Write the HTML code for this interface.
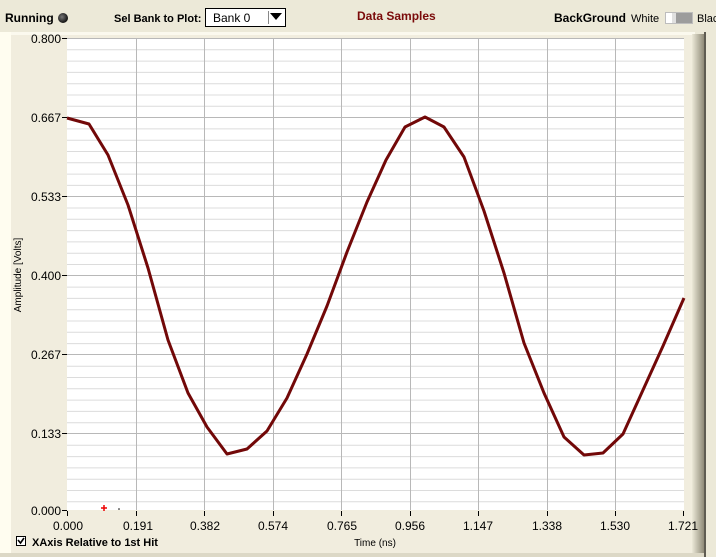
<!DOCTYPE html>
<html><head><meta charset="utf-8"><style>
html,body{margin:0;padding:0;width:716px;height:557px;overflow:hidden;background:#ece9d8;}
svg{display:block;font-family:"Liberation Sans",sans-serif;}
</style></head><body>
<svg width="716" height="557" viewBox="0 0 716 557">
<defs>
<linearGradient id="sh" x1="0" x2="1"><stop offset="0" stop-color="#ece9d8"/><stop offset="1" stop-color="#8f8a78"/></linearGradient>
<radialGradient id="led" cx="0.4" cy="0.4" r="0.6"><stop offset="0" stop-color="#777"/><stop offset="1" stop-color="#111"/></radialGradient>
</defs>
<rect width="716" height="557" fill="#ece9d8"/>
<rect x="0" y="32" width="11" height="525" fill="#fffdf0"/>
<rect x="11" y="32" width="684" height="521" fill="#f1edde"/>
<rect x="11" y="32" width="684" height="3" fill="#fbf9ee"/>
<rect x="692" y="34" width="12" height="519" fill="url(#sh)"/>
<rect x="704" y="32" width="2" height="525" fill="#5f5c52"/>
<rect x="706" y="32" width="10" height="525" fill="#ece9d8"/>
<rect x="0" y="553" width="704" height="4" fill="#dcd8c6"/>
<!-- header -->
<text x="5" y="22" font-size="12" font-weight="bold" fill="#000">Running</text>
<circle cx="63" cy="18" r="5" fill="url(#led)"/>
<text x="114" y="22" font-size="11" font-weight="bold" fill="#000">Sel Bank to Plot:</text>
<rect x="205.5" y="8.5" width="80" height="18" fill="#fff" stroke="#000"/>
<text x="213" y="22" font-size="12" fill="#000">Bank 0</text>
<line x1="268.5" y1="11" x2="268.5" y2="24" stroke="#888"/>
<path d="M270 13 L282 13 L276 20 Z" fill="#000"/>
<text x="357" y="20" font-size="12" font-weight="bold" fill="#7a0a0a">Data Samples</text>
<text x="554" y="22" font-size="12" font-weight="bold" fill="#000">BackGround</text>
<text x="631" y="22" font-size="11" fill="#000">White</text>
<rect x="665.5" y="12.5" width="27" height="11" fill="#9c9c9c" stroke="#bdbdbd"/>
<rect x="666" y="13" width="10" height="10" fill="#fff"/>
<rect x="672" y="13" width="4" height="10" fill="#e0e0e0"/>
<text x="697" y="22" font-size="11" fill="#000">Black</text>
<!-- plot -->
<rect x="67" y="38" width="617" height="472" fill="#fff"/>
<g stroke="#dcdcdc" stroke-width="1">
<path d="M67 49.8H684M67 61.1H684M67 72.4H684M67 83.7H684M67 95H684M67 106.3H684
M67 128.9H684M67 140.2H684M67 151.5H684M67 162.8H684M67 174.1H684M67 185.4H684
M67 208H684M67 219.3H684M67 230.6H684M67 241.9H684M67 253.2H684M67 264.5H684
M67 287.1H684M67 298.4H684M67 309.7H684M67 321H684M67 332.3H684M67 343.6H684
M67 366.2H684M67 377.5H684M67 388.8H684M67 400.1H684M67 411.4H684M67 422.7H684
M67 445.3H684M67 456.6H684M67 467.9H684M67 479.2H684M67 490.5H684M67 501.8H684"/>
</g>
<g stroke="#b8b8b8" stroke-width="1">
<path d="M67 38.5H684M67 117.5H684M67 196.5H684M67 275.5H684M67 354.5H684M67 433.5H684"/>
<path d="M136.5 38V510M204.5 38V510M273.5 38V510M341.5 38V510M410.5 38V510M478.5 38V510M547.5 38V510M615.5 38V510"/>
</g>
<g stroke="#000" stroke-width="1">
<path d="M62 38.5H67M62 117.5H67M62 196.5H67M62 275.5H67M62 354.5H67M62 433.5H67M62 510.5H67"/>
<path d="M67.5 511V516M136.5 511V516M204.5 511V516M273.5 511V516M341.5 511V516M410.5 511V516M478.5 511V516M547.5 511V516M615.5 511V516M683.5 511V516"/>
</g>
<g font-size="12" fill="#000" text-anchor="end">
<text x="61" y="43">0.800</text><text x="61" y="122">0.667</text><text x="61" y="201">0.533</text>
<text x="61" y="280">0.400</text><text x="61" y="359">0.267</text><text x="61" y="438">0.133</text><text x="61" y="515">0.000</text>
</g>
<g font-size="12" fill="#000" text-anchor="middle">
<text x="68" y="530">0.000</text><text x="138" y="530">0.191</text><text x="205" y="530">0.382</text><text x="273" y="530">0.574</text>
<text x="342" y="530">0.765</text><text x="410" y="530">0.956</text><text x="478" y="530">1.147</text><text x="547" y="530">1.338</text>
<text x="615" y="530">1.530</text><text x="683" y="530">1.721</text>
</g>
<text x="0" y="0" font-size="10" fill="#000" text-anchor="middle" transform="translate(21,275) rotate(-90)">Amplitude [Volts]</text>
<text x="375" y="546" font-size="10" fill="#000" text-anchor="middle">Time (ns)</text>
<rect x="16.5" y="536.5" width="9" height="9" fill="#fff" stroke="#000"/>
<path d="M18 540 L20.5 543 L24 538" stroke="#000" stroke-width="1.6" fill="none"/>
<text x="32" y="546" font-size="11" font-weight="bold" fill="#000">XAxis Relative to 1st Hit</text>
<path d="M104 505V511M101 508H107" stroke="#e00" stroke-width="1.5"/>
<circle cx="119" cy="509" r="0.8" fill="#000"/>
<polyline fill="none" stroke="#720808" stroke-width="3" stroke-linejoin="round" points="67,118 89,124 108,155 128,205 148,268 168,340 188,393 207,427 227,454 247,449 267,431 287,398 307,354 327,306 347,252 367,202 386,160 405,127 425,117 444,127 464,157 484,211 504,273 524,343 544,393 564,437 584,455 603,453 623,434 643,390 663,346 684,298"/>
</svg>
</body></html>
